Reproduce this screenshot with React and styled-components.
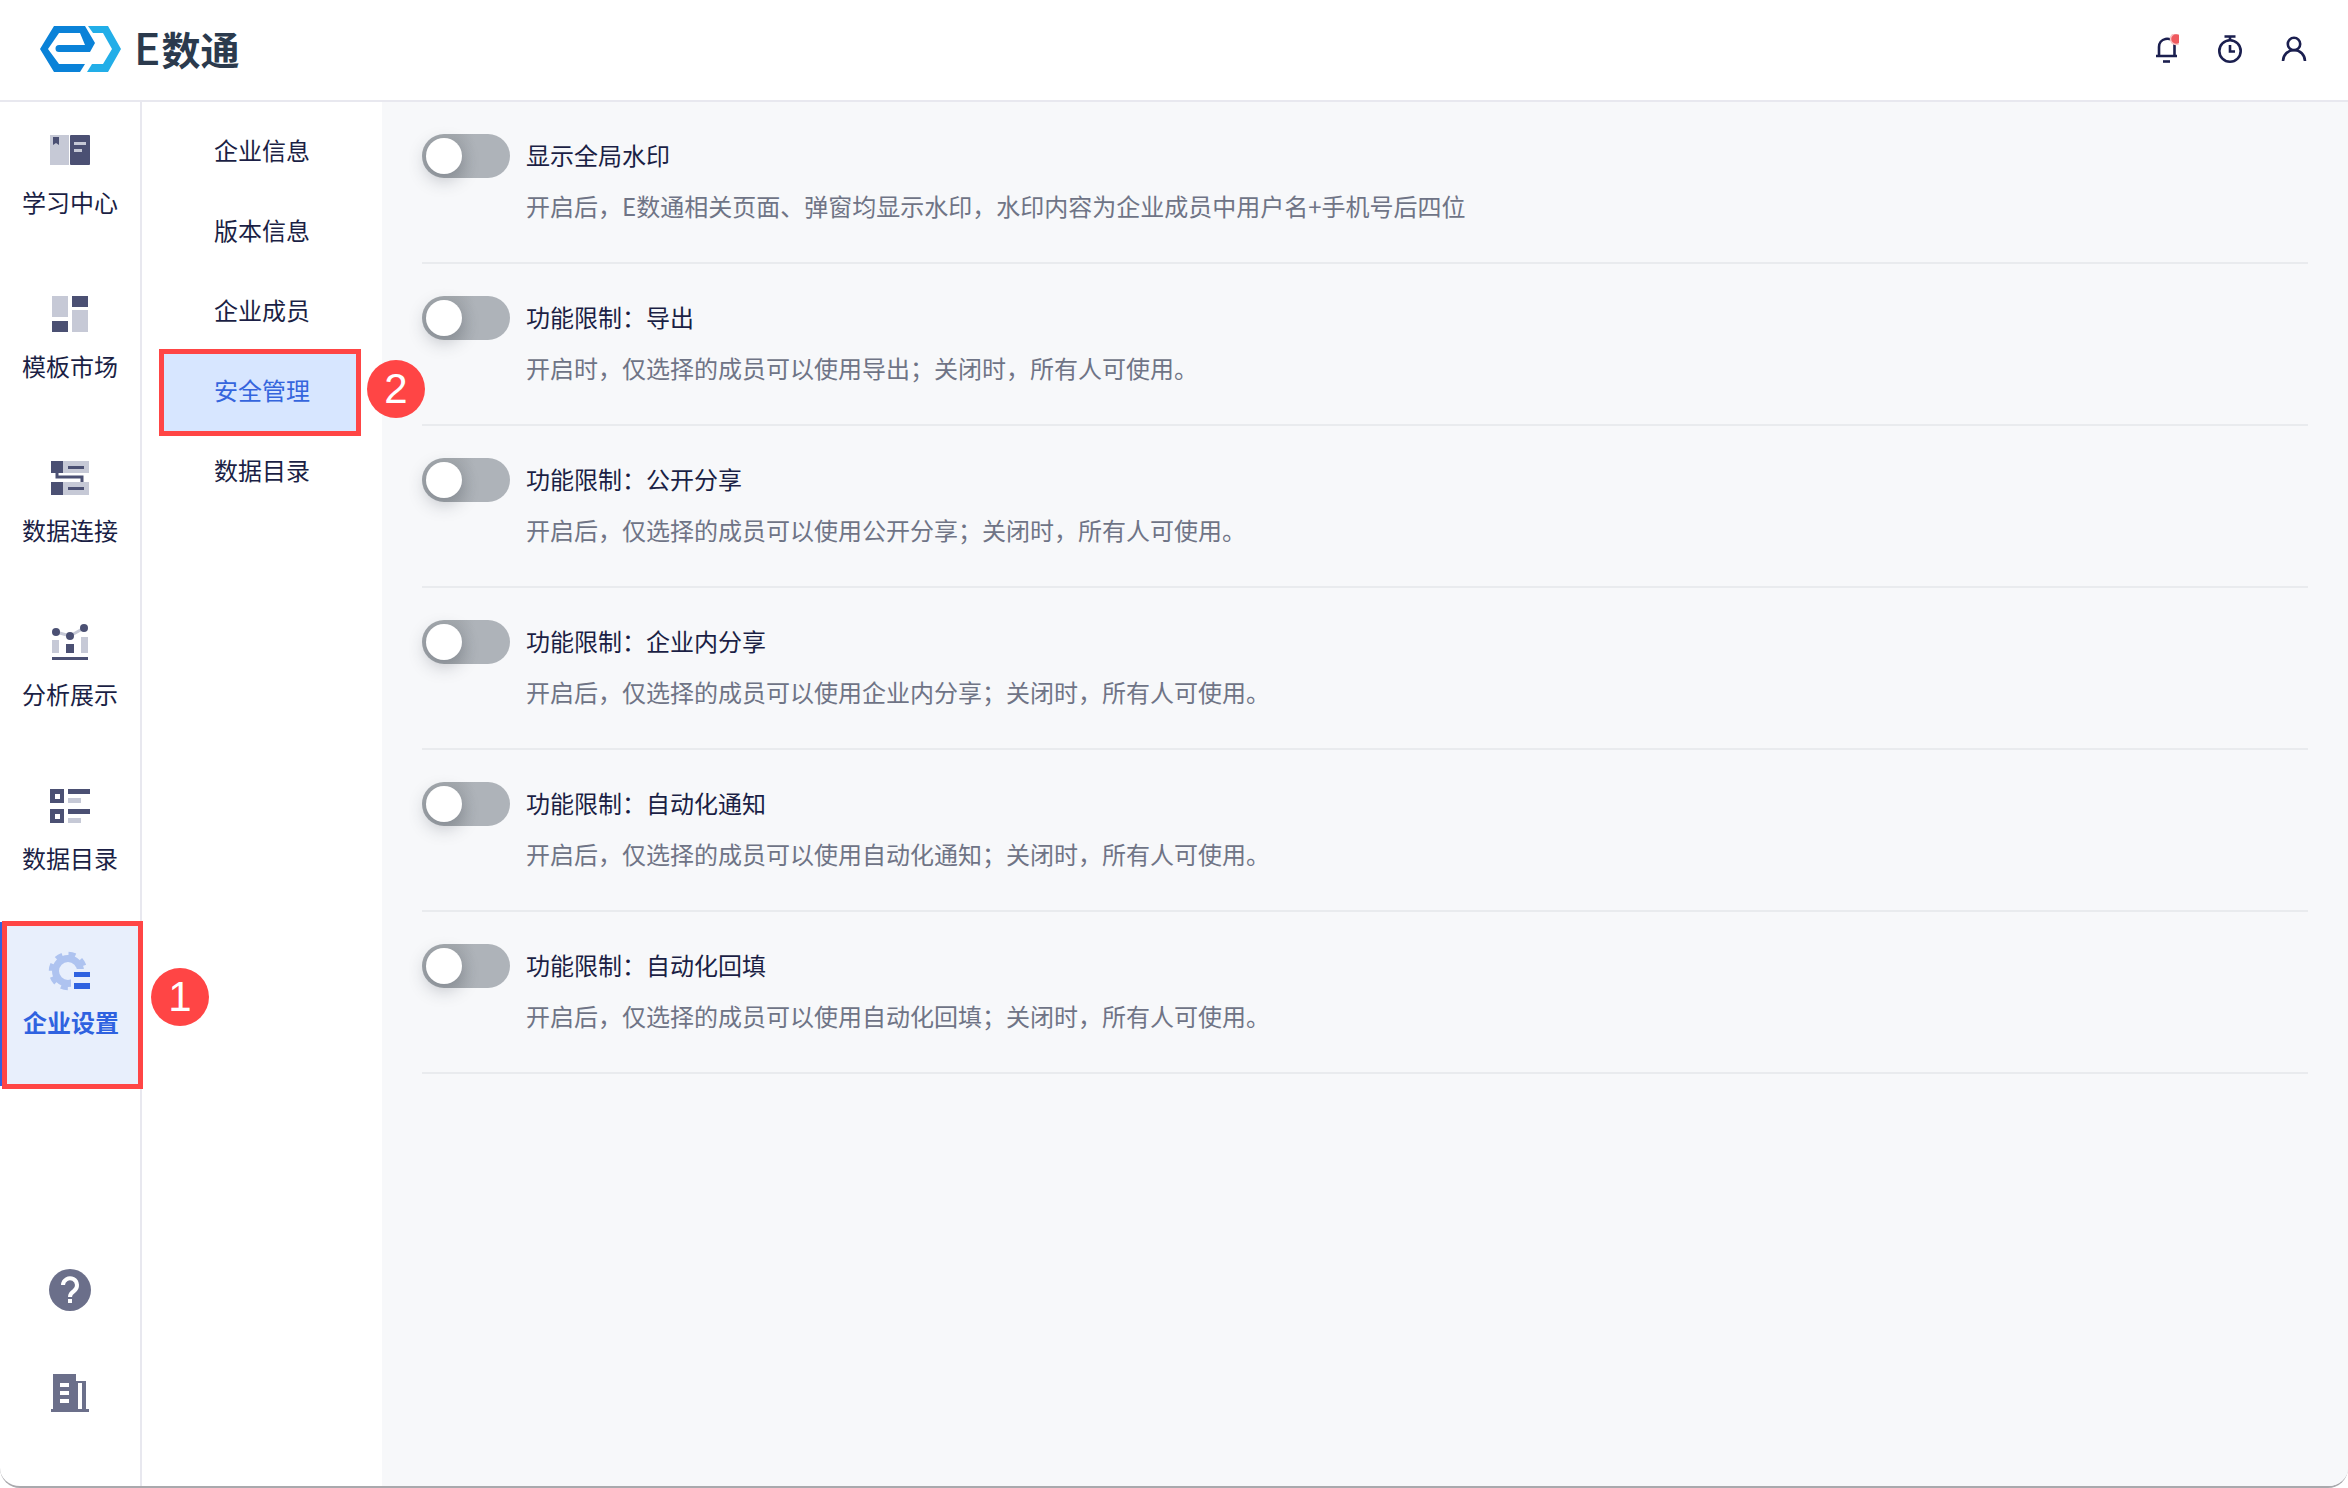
import React from "react";
import styled, { createGlobalStyle } from "styled-components";

const GlobalStyle = createGlobalStyle`
  html, body {
    margin: 0;
    padding: 0;
    background: #fff;
  }
  * {
    box-sizing: border-box;
  }
`;

const DARK = "#4b5073";
const LIGHT = "#c6c9d6";
const GREY = "#6b6f8a";

const Page = styled.div`
  width: 2348px;
  height: 1488px;
  display: flex;
  flex-direction: column;
  overflow: hidden;
  background: #fff;
  border-bottom: 2px solid #a9a9ad;
  border-radius: 0 0 20px 20px;
  font-family: "Noto Sans CJK SC", "Noto Sans", sans-serif;
  font-size: 24px;
  color: #1b1f45;
`;

const Header = styled.header`
  height: 102px;
  flex: none;
  display: flex;
  align-items: center;
  justify-content: space-between;
  padding: 0 41px 2px 40px;
  border-bottom: 2px solid #e8e8ef;
`;

const Brand = styled.div`
  display: flex;
  align-items: center;
  gap: 13px;
`;

const BrandName = styled.span`
  font-size: 39px;
  font-weight: 700;
  line-height: 48px;
  padding-bottom: 5px;
  color: #2b3a4d;
`;

const BrandLetter = styled.span`
  font-size: 44px;
  font-weight: 500;
  margin-right: 1px;
`;

const HeaderIcons = styled.div`
  display: flex;
  align-items: center;
  gap: 38px;
`;

const Body = styled.div`
  flex: 1;
  min-height: 0;
  display: flex;
`;

const Rail = styled.nav`
  width: 142px;
  flex: none;
  display: flex;
  flex-direction: column;
  border-right: 2px solid #e8e8ef;
`;

const RailItem = styled.div`
  position: relative;
  height: 164px;
  display: flex;
  flex-direction: column;
  align-items: center;
  padding-top: 24px;
  background: ${(p) => (p.$active ? "#e8effc" : "transparent")};
  border-left: ${(p) => (p.$active ? "2px solid #2f62e0" : "none")};
  color: ${(p) => (p.$active ? "#2f62e0" : "inherit")};
  font-weight: ${(p) => (p.$active ? 700 : 400)};
`;

const RailLabel = styled.span`
  line-height: 36px;
  margin-top: 10px;
`;

const RailFooter = styled.div`
  margin-top: auto;
  display: flex;
  flex-direction: column;
  align-items: center;
  gap: 63px;
  padding-bottom: 74px;
`;

const RedFrame = styled.div`
  position: absolute;
  border: 5px solid #ff4545;
  pointer-events: none;
  top: ${(p) => p.$top}px;
  left: ${(p) => p.$left}px;
  right: ${(p) => p.$right}px;
  bottom: ${(p) => p.$bottom}px;
`;

const Badge = styled.div`
  position: absolute;
  width: 58px;
  height: 58px;
  border-radius: 50%;
  background: #ff4545;
  color: #fff;
  display: flex;
  align-items: center;
  justify-content: center;
  font-family: "Liberation Sans", Arial, sans-serif;
  font-weight: 400;
  font-size: 42px;
  line-height: 58px;
  top: ${(p) => p.$top}px;
  left: ${(p) => p.$left}px;
`;

const SubMenu = styled.ul`
  width: 240px;
  flex: none;
  margin: 0;
  padding: 9px 26px 0 22px;
  list-style: none;
`;

const SubItem = styled.li`
  position: relative;
  height: 80px;
  display: flex;
  align-items: center;
  justify-content: center;
  padding: 0 0 3px 4px;
  background: ${(p) => (p.$active ? "#d7e6ff" : "transparent")};
  color: ${(p) => (p.$active ? "#3565dd" : "inherit")};
`;

const Content = styled.main`
  flex: 1;
  min-width: 0;
  padding: 0 40px;
  background: #f7f8fa;
`;

const SettingRow = styled.section`
  height: 162px;
  padding-top: 32px;
  border-bottom: 2px solid #e9ebee;
`;

const SettingHead = styled.div`
  display: flex;
  align-items: center;
  gap: 16px;
  height: 44px;
`;

const Toggle = styled.div`
  width: 88px;
  height: 44px;
  flex: none;
  padding: 4px;
  border-radius: 22px;
  background: linear-gradient(90deg, #a2a7ac 0%, #a5aaaf 40%, #aeb3b9 60%);
`;

const Knob = styled.div`
  width: 36px;
  height: 36px;
  border-radius: 50%;
  background: #fff;
  box-shadow: 0 6px 18px rgba(40, 46, 60, 0.28);
`;

const SettingTitle = styled.span`
  line-height: 36px;
  padding-bottom: 3px;
`;

const SettingDesc = styled.p`
  margin: 10px 0 0 104px;
  line-height: 36px;
  color: #6f7486;
`;

const railIcons = {
  book: (
    <>
      <rect x="4" y="9" width="19" height="30" fill={LIGHT} />
      <path d="M7 11h6v8l-3-2-3 2z" fill={DARK} />
      <rect x="24" y="9" width="20" height="30" rx="1" fill={DARK} />
      <rect x="28" y="16" width="12" height="3" fill={LIGHT} />
      <rect x="28" y="23" width="8" height="3" fill={LIGHT} />
    </>
  ),
  template: (
    <>
      <rect x="6" y="6" width="16" height="21" fill={LIGHT} />
      <rect x="6" y="31" width="16" height="11" fill={DARK} />
      <rect x="26" y="6" width="16" height="11" fill={DARK} />
      <rect x="26" y="20" width="16" height="22" fill={LIGHT} />
    </>
  ),
  connect: (
    <>
      <rect x="17" y="7" width="26" height="12" fill={LIGHT} />
      <rect x="17" y="28" width="26" height="13" fill={LIGHT} />
      <rect x="5" y="7" width="12" height="12" fill={DARK} />
      <rect x="5" y="28" width="12" height="13" fill={DARK} />
      <rect x="22" y="12" width="16" height="3" fill={DARK} />
      <rect x="22" y="33" width="16" height="3" fill={DARK} />
      <path d="M11 19v4h25v5" fill="none" stroke={DARK} strokeWidth="3" />
    </>
  ),
  chart: (
    <>
      <path d="M10 14l14 4 14-8" fill="none" stroke={LIGHT} strokeWidth="3" />
      <circle cx="10" cy="14" r="4" fill={DARK} />
      <circle cx="24" cy="18" r="4" fill={DARK} />
      <circle cx="38" cy="10" r="4" fill={DARK} />
      <rect x="6" y="22" width="7" height="13" fill={LIGHT} />
      <rect x="20" y="26" width="8" height="9" fill={DARK} />
      <rect x="35" y="19" width="7" height="16" fill={LIGHT} />
      <rect x="6" y="39" width="36" height="3" fill={DARK} />
    </>
  ),
  catalog: (
    <>
      <path d="M4 7h14v14H4zM9 12v5h5v-5z" fill={DARK} fillRule="evenodd" />
      <path d="M4 27h14v14H4zM9 32v5h5v-5z" fill={DARK} fillRule="evenodd" />
      <rect x="22" y="7" width="22" height="5" fill={DARK} />
      <rect x="22" y="16" width="13" height="5" fill={LIGHT} />
      <rect x="22" y="27" width="22" height="5" fill={DARK} />
      <rect x="22" y="36" width="13" height="5" fill={LIGHT} />
    </>
  ),
  gear: (
    <>
      <circle cx="21" cy="25" r="12.5" fill="none" stroke="#aec3f0" strokeWidth="7" />
      <circle cx="21" cy="25" r="17" fill="none" stroke="#aec3f0" strokeWidth="4.5" strokeDasharray="7 6.35" />
      <rect x="24" y="23" width="22" height="22" fill="#e8effc" />
      <rect x="27" y="26" width="16" height="5" fill="#2f62e0" />
      <rect x="27" y="37" width="16" height="6" fill="#2f62e0" />
    </>
  ),
};

const RailIcon = ({ name }) => (
  <svg width="48" height="48" viewBox="0 0 48 48">
    {railIcons[name]}
  </svg>
);

const HelpIcon = () => (
  <svg width="42" height="42" viewBox="0 0 42 42">
    <circle cx="21" cy="21" r="21" fill={GREY} />
    <path d="M14 16a7 7 0 1 1 11 6c-3 2-4 3-4 6" fill="none" stroke="#fff" strokeWidth="4" />
    <rect x="19" y="30" width="4" height="4" fill="#fff" />
  </svg>
);

const BuildingIcon = () => (
  <svg width="38" height="38" viewBox="0 0 38 38">
    <path d="M2 0h23v35H2z" fill={GREY} />
    <path d="M25 7h10v28H25zM27 9v26h4V9z" fill={GREY} fillRule="evenodd" />
    <rect x="0" y="35" width="38" height="3" fill={GREY} />
    <rect x="9" y="9" width="9" height="4" fill="#fff" />
    <rect x="9" y="17" width="9" height="4" fill="#fff" />
    <rect x="9" y="25" width="9" height="4" fill="#fff" />
  </svg>
);

const BellIcon = () => (
  <svg width="24" height="30" viewBox="0 0 24 30" fill="none" stroke="#1b1f4f" strokeWidth="2.6">
    <path d="M1 22h21M4 22V13a8 8 0 0 1 15.5-3V22" />
    <path d="M8 27.5h7" />
    <circle cx="21" cy="5" r="5.5" fill="#ef5a5f" stroke="#f8c3c5" strokeWidth="1.5" />
  </svg>
);

const TimerIcon = () => (
  <svg width="26" height="28" viewBox="0 0 26 28" fill="none" stroke="#1b1f4f" strokeWidth="2.6">
    <circle cx="13" cy="16" r="10.7" />
    <path d="M7.5 1.5h11M13 1.5v4" />
    <path d="M13 10v6.5h5" />
  </svg>
);

const UserIcon = () => (
  <svg width="26" height="26" viewBox="0 0 26 26" fill="none" stroke="#1b1f4f" strokeWidth="2.6">
    <circle cx="13" cy="8" r="6.2" />
    <path d="M2 25a11 11 0 0 1 22 0" />
  </svg>
);

const Logo = () => (
  <svg width="81" height="46" viewBox="40 27 81 46">
    <path d="M40 50 54 27h31l10 17-5 9H59a3.5 3.5 0 0 1 0-7h26l-5-12H59L48 50l11 15h26l-5 8H54z" fill="#0a82d8" />
    <path d="M88 27h20l13 23-13 23H87l5-8h11l9-15-9-16H93z" fill="#22aee8" />
  </svg>
);

const railItems = [
  { icon: "book", label: "学习中心" },
  { icon: "template", label: "模板市场" },
  { icon: "connect", label: "数据连接" },
  { icon: "chart", label: "分析展示" },
  { icon: "catalog", label: "数据目录" },
  { icon: "gear", label: "企业设置", active: true },
];

const subItems = ["企业信息", "版本信息", "企业成员", "安全管理", "数据目录"];

const settings = [
  { title: "显示全局水印", desc: "开启后，E数通相关页面、弹窗均显示水印，水印内容为企业成员中用户名+手机号后四位" },
  { title: "功能限制：导出", desc: "开启时，仅选择的成员可以使用导出；关闭时，所有人可使用。" },
  { title: "功能限制：公开分享", desc: "开启后，仅选择的成员可以使用公开分享；关闭时，所有人可使用。" },
  { title: "功能限制：企业内分享", desc: "开启后，仅选择的成员可以使用企业内分享；关闭时，所有人可使用。" },
  { title: "功能限制：自动化通知", desc: "开启后，仅选择的成员可以使用自动化通知；关闭时，所有人可使用。" },
  { title: "功能限制：自动化回填", desc: "开启后，仅选择的成员可以使用自动化回填；关闭时，所有人可使用。" },
];

export default function App() {
  return (
    <>
      <GlobalStyle />
      <Page>
        <Header>
          <Brand>
            <Logo />
            <BrandName><BrandLetter>E</BrandLetter>数通</BrandName>
          </Brand>
          <HeaderIcons>
            <BellIcon />
            <TimerIcon />
            <UserIcon />
          </HeaderIcons>
        </Header>
        <Body>
          <Rail>
            {railItems.map((item) => (
              <RailItem key={item.label} $active={item.active}>
                <RailIcon name={item.icon} />
                <RailLabel>{item.label}</RailLabel>
                {item.active && (
                  <>
                    <RedFrame $top={-1} $left={0} $right={-3} $bottom={-3} />
                    <Badge $top={46} $left={149}>1</Badge>
                  </>
                )}
              </RailItem>
            ))}
            <RailFooter>
              <HelpIcon />
              <BuildingIcon />
            </RailFooter>
          </Rail>
          <SubMenu>
            {subItems.map((label) => {
              const active = label === "安全管理";
              return (
                <SubItem key={label} $active={active}>
                  {label}
                  {active && (
                    <>
                      <RedFrame $top={-2} $left={-5} $right={-5} $bottom={-5} />
                      <Badge $top={9} $left={203}>2</Badge>
                    </>
                  )}
                </SubItem>
              );
            })}
          </SubMenu>
          <Content>
            {settings.map((s) => (
              <SettingRow key={s.title}>
                <SettingHead>
                  <Toggle>
                    <Knob />
                  </Toggle>
                  <SettingTitle>{s.title}</SettingTitle>
                </SettingHead>
                <SettingDesc>{s.desc}</SettingDesc>
              </SettingRow>
            ))}
          </Content>
        </Body>
      </Page>
    </>
  );
}
